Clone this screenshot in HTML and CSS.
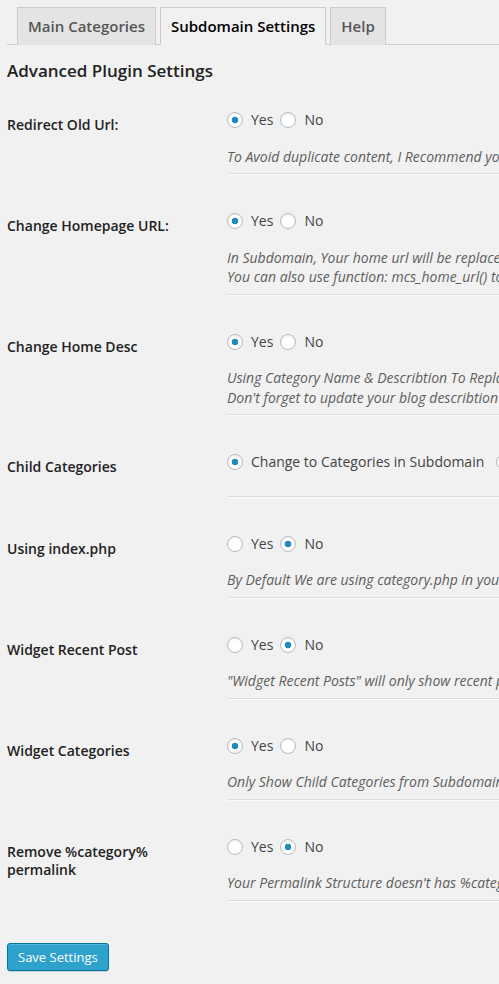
FILE: index.html
```html
<!DOCTYPE html>
<html lang="en">
<head>
<meta charset="utf-8">
<title>Subdomain Settings</title>
<link rel="stylesheet" href="styles.css">
</head>
<body>
<div class="wrap">
  <nav class="nav-tabs">
    <a class="nav-tab" href="#">Main Categories</a>
    <a class="nav-tab nav-tab-active" href="#">Subdomain Settings</a>
    <a class="nav-tab" href="#">Help</a>
  </nav>
  <h3 class="section-title">Advanced Plugin Settings</h3>
  <form>
    <table class="form-table">
      <tbody>
        <tr>
          <th>Redirect Old Url:</th>
          <td>
            <div class="opts">
              <label class="opt"><input type="radio" name="r1" checked> Yes</label>
              <label class="opt"><input type="radio" name="r1"> No</label>
            </div>
            <p class="description">To Avoid duplicate content, I Recommend you to redirect old category url to subdomain url</p>
            <hr class="sep">
          </td>
        </tr>
        <tr>
          <th>Change Homepage URL:</th>
          <td>
            <div class="opts">
              <label class="opt"><input type="radio" name="r2" checked> Yes</label>
              <label class="opt"><input type="radio" name="r2"> No</label>
            </div>
            <p class="description">In Subdomain, Your home url will be replaced with subdomain url<br>You can also use function: mcs_home_url() to get the home url</p>
            <hr class="sep">
          </td>
        </tr>
        <tr>
          <th>Change Home Desc</th>
          <td>
            <div class="opts">
              <label class="opt"><input type="radio" name="r3" checked> Yes</label>
              <label class="opt"><input type="radio" name="r3"> No</label>
            </div>
            <p class="description">Using Category Name &amp; Describtion To Replace Blog Name &amp; Describtion<br>Don't forget to update your blog describtion in category page</p>
            <hr class="sep">
          </td>
        </tr>
        <tr>
          <th>Child Categories</th>
          <td>
            <div class="opts opts-wide">
              <label class="opt"><input type="radio" name="r4" checked> Change to Categories in Subdomain</label>
              <label class="opt"><input type="radio" name="r4"> Keep as Categories in Main Domain</label>
            </div>
            <p class="description"></p>
            <hr class="sep">
          </td>
        </tr>
        <tr>
          <th>Using index.php</th>
          <td>
            <div class="opts">
              <label class="opt"><input type="radio" name="r5"> Yes</label>
              <label class="opt"><input type="radio" name="r5" checked> No</label>
            </div>
            <p class="description">By Default We are using category.php in your theme for subdomain</p>
            <hr class="sep">
          </td>
        </tr>
        <tr>
          <th>Widget Recent Post</th>
          <td>
            <div class="opts">
              <label class="opt"><input type="radio" name="r6"> Yes</label>
              <label class="opt"><input type="radio" name="r6" checked> No</label>
            </div>
            <p class="description">"Widget Recent Posts" will only show recent posts from subdomain</p>
            <hr class="sep">
          </td>
        </tr>
        <tr>
          <th>Widget Categories</th>
          <td>
            <div class="opts">
              <label class="opt"><input type="radio" name="r7" checked> Yes</label>
              <label class="opt"><input type="radio" name="r7"> No</label>
            </div>
            <p class="description">Only Show Child Categories from Subdomain in widget categories</p>
            <hr class="sep">
          </td>
        </tr>
        <tr>
          <th>Remove %category% permalink</th>
          <td>
            <div class="opts">
              <label class="opt"><input type="radio" name="r8"> Yes</label>
              <label class="opt"><input type="radio" name="r8" checked> No</label>
            </div>
            <p class="description">Your Permalink Structure doesn't has %category% tag</p>
            <hr class="sep">
          </td>
        </tr>
      </tbody>
    </table>
    <p class="submit"><button type="button" class="button-primary">Save Settings</button></p>
  </form>
</div>
</body>
</html>
```

FILE: styles.css
```css
html, body {
  margin: 0;
  padding: 0;
  background: #f1f1f1;
  overflow: hidden;
}

body {
  font-family: "Open Sans", "Noto Sans", sans-serif;
  font-size: 13px;
  color: #444;
  width: 499px;
  height: 984px;
}

.wrap {
  padding-left: 7px;
}

.nav-tabs {
  display: flex;
  padding: 7px 0 0 6px;
  border-bottom: 1px solid #ccc;
  width: 1200px;
}

.nav-tab {
  display: block;
  margin: 0 0 -1px 4px;
  padding: 6px 10px;
  border: 1px solid #ccc;
  border-bottom: none;
  background: #e4e4e4;
  color: #555;
  font-size: 15px;
  font-weight: 600;
  line-height: 24px;
  text-decoration: none;
}

.nav-tab-active {
  background: #f1f1f1;
  color: #000;
  border-bottom: 1px solid #f1f1f1;
}

.section-title {
  margin: 14px 0 14px;
  font-size: 17px;
  line-height: 23px;
  font-weight: 600;
  color: #222;
}

.form-table {
  table-layout: fixed;
  width: 900px;
  border-collapse: collapse;
  border-spacing: 0;
  margin-top: 0;
}

.form-table th {
  width: 200px;
  padding: 20px 10px 20px 0;
  text-align: left;
  vertical-align: top;
  font-size: 14px;
  line-height: 18.2px;
  font-weight: 600;
  color: #222;
}

.form-table td {
  padding: 15px 10px;
  vertical-align: top;
  font-size: 14px;
}

.opts {
  display: flex;
  align-items: center;
  height: 18px;
  gap: 7px;
  white-space: nowrap;
}

.opts-wide {
  gap: 12px;
}

.opt {
  display: inline-flex;
  align-items: center;
  gap: 8px;
  color: #444;
  font-size: 14px;
  line-height: 18px;
}

.opt input {
  -webkit-appearance: none;
  appearance: none;
  box-sizing: border-box;
  width: 16px;
  height: 16px;
  margin: 0;
  border: 1px solid #b4b9be;
  border-radius: 50%;
  background: #fff;
  box-shadow: inset 0 1px 2px rgba(0, 0, 0, 0.07);
  flex: none;
}

.opt input:checked {
  background: radial-gradient(circle, #1e8cbe 0, #1e8cbe 3px, #fff 3.6px);
}

.description {
  margin: 0;
  padding-top: 17.5px;
  font-size: 14px;
  line-height: 19.5px;
  font-style: italic;
  color: #5e5e5e;
  white-space: nowrap;
}

.sep {
  margin: 7px 0;
  height: 0;
  border: 0;
  border-top: 1px solid #ddd;
  border-bottom: 1px solid #fafafa;
}

.submit {
  margin: 19px 0 0;
}

.button-primary {
  height: 28px;
  padding: 0 10px 1px;
  border: 1px solid #0074a2;
  border-radius: 3px;
  background: #2ea2cc;
  box-shadow: inset 0 1px 0 rgba(120, 200, 230, 0.5), 0 1px 0 rgba(0, 0, 0, 0.15);
  color: #fff;
  font-family: "Open Sans", "Noto Sans", sans-serif;
  font-size: 13px;
  line-height: 26px;
}
```
